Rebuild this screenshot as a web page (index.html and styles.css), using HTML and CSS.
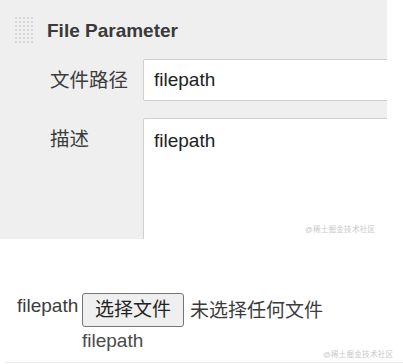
FILE: index.html
```html
<!DOCTYPE html>
<html lang="zh">
<head>
<meta charset="utf-8">
<link rel="stylesheet" href="styles.css">
</head>
<body>
<div class="panel">
  <div class="header">
    <svg class="grip" width="19" height="27" viewBox="0 0 19 27">
      <g fill="#d6d6d6">
        <rect x="0" y="0" width="2" height="2"/><rect x="4" y="0" width="2" height="2"/><rect x="8" y="0" width="2" height="2"/><rect x="12" y="0" width="2" height="2"/><rect x="16" y="0" width="2" height="2"/>
        <rect x="0" y="4" width="2" height="2"/><rect x="4" y="4" width="2" height="2"/><rect x="8" y="4" width="2" height="2"/><rect x="12" y="4" width="2" height="2"/><rect x="16" y="4" width="2" height="2"/>
        <rect x="0" y="8" width="2" height="2"/><rect x="4" y="8" width="2" height="2"/><rect x="8" y="8" width="2" height="2"/><rect x="12" y="8" width="2" height="2"/><rect x="16" y="8" width="2" height="2"/>
        <rect x="0" y="12" width="2" height="2"/><rect x="4" y="12" width="2" height="2"/><rect x="8" y="12" width="2" height="2"/><rect x="12" y="12" width="2" height="2"/><rect x="16" y="12" width="2" height="2"/>
        <rect x="0" y="16" width="2" height="2"/><rect x="4" y="16" width="2" height="2"/><rect x="8" y="16" width="2" height="2"/><rect x="12" y="16" width="2" height="2"/><rect x="16" y="16" width="2" height="2"/>
        <rect x="0" y="20" width="2" height="2"/><rect x="4" y="20" width="2" height="2"/><rect x="8" y="20" width="2" height="2"/><rect x="12" y="20" width="2" height="2"/><rect x="16" y="20" width="2" height="2"/>
        <rect x="0" y="24" width="2" height="2"/><rect x="4" y="24" width="2" height="2"/><rect x="8" y="24" width="2" height="2"/><rect x="12" y="24" width="2" height="2"/><rect x="16" y="24" width="2" height="2"/>
      </g>
    </svg>
    <span class="title">File Parameter</span>
  </div>
  <div class="row">
    <div class="label label-mid">文件路径</div>
    <div class="field input">filepath</div>
  </div>
  <div class="row row-area">
    <div class="label label-top">描述</div>
    <div class="field area">filepath</div>
  </div>
  <div class="mark mark-top">@稀土掘金技术社区</div>
</div>

<div class="lower">
  <div class="file-grid">
    <div class="file-label">filepath</div>
    <div class="file-control">
      <span class="btn">选择文件</span>
      <span class="none">未选择任何文件</span>
    </div>
    <div></div>
    <div class="desc">filepath</div>
  </div>
  <div class="rule"></div>
  <div class="mark mark-bottom">@稀土掘金技术社区</div>
</div>
</body>
</html>
```
FILE: styles.css
```css
html, body {
  margin: 0;
  padding: 0;
  background: #ffffff;
}
body {
  width: 403px;
  height: 364px;
  overflow: hidden;
  font-family: "Liberation Sans", Arial, "Noto Sans CJK SC", sans-serif;
  color: #333333;
  position: relative;
}
.panel {
  width: 387px;
  height: 239px;
  background: #efefef;
  overflow: hidden;
  position: relative;
}
.header {
  display: flex;
  align-items: center;
  gap: 13px;
  padding: 17px 0 0 15px;
  height: 27px;
}
.grip { display: block; }
.title {
  font-size: 19px;
  font-weight: bold;
  color: #3a3a3a;
  line-height: 27px;
}
.row {
  display: grid;
  grid-template-columns: 143px 260px;
  margin-top: 15px;
}
.row-area { margin-top: 17px; }
.label {
  padding-left: 50px;
  font-size: 19.5px;
  line-height: 22px;
  color: #3c3c3c;
}
.label-mid { align-self: center; }
.label-top { padding-top: 10px; }
.field {
  background: #ffffff;
  border: 1px solid #cfcfcf;
  border-radius: 2px;
  box-sizing: border-box;
  padding-left: 10px;
  font-size: 19px;
  line-height: 22px;
  color: #222;
}
.input {
  height: 42px;
  padding-top: 9px;
}
.area {
  height: 150px;
  padding-top: 11px;
}
.mark {
  position: absolute;
  font-size: 7.5px;
  color: #c8c8c8;
  white-space: nowrap;
  letter-spacing: 0.3px;
}
.mark-top { left: 305px; top: 223px; }
.lower { position: static; }
.file-grid {
  display: grid;
  grid-template-columns: 65px auto;
  padding-left: 17px;
  margin-top: 54px;
}
.file-label {
  font-size: 19px;
  line-height: 22px;
  padding-top: 2px;
  color: #3c3c3c;
}
.file-control {
  display: flex;
  align-items: center;
  gap: 6px;
}
.btn {
  display: inline-block;
  box-sizing: border-box;
  width: 102px;
  height: 34px;
  border: 1px solid #767676;
  border-radius: 3px;
  background: #efefef;
  font-size: 19px;
  line-height: 32px;
  text-align: center;
  color: #222;
}
.none {
  font-size: 19px;
  line-height: 22px;
  color: #3c3c3c;
  padding-top: 2px;
}
.desc {
  font-size: 19px;
  line-height: 22px;
  margin-top: 3px;
  color: #4a4a4a;
}
.rule {
  margin: 10px 0 0 5px;
  border-top: 1px solid #e8e8e8;
}
.mark-bottom { left: 323px; top: 348px; }
```
